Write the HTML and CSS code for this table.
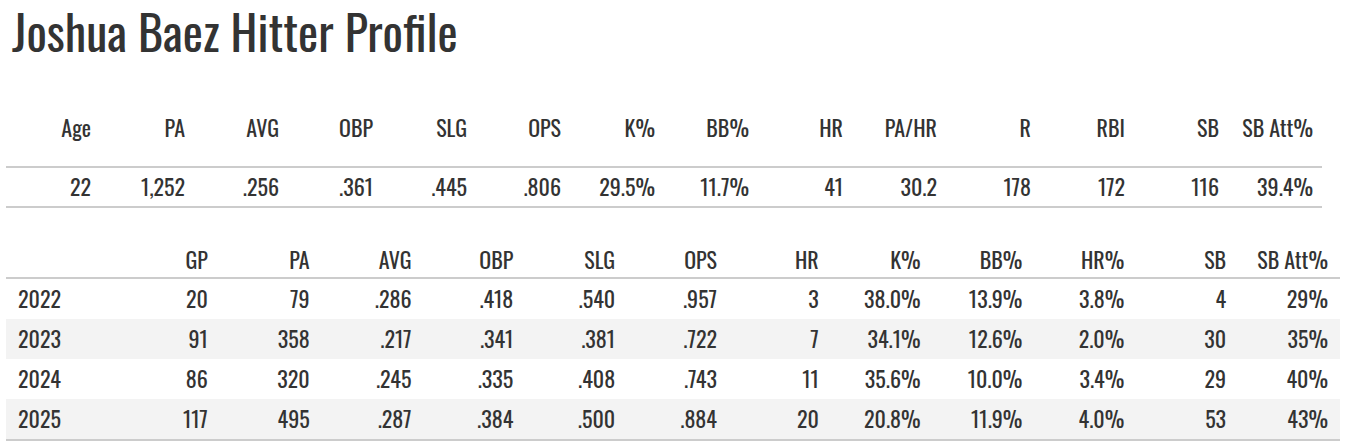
FILE: index.html
```html
<!DOCTYPE html>
<html lang="en">
<head>
<meta charset="utf-8">
<title>Joshua Baez Hitter Profile</title>
<link rel="stylesheet" href="styles.css">
</head>
<body>
<main class="page">
  <h1 class="title">Joshua Baez Hitter Profile</h1>

  <table class="stats summary">
    <thead>
      <tr>
        <th>Age</th><th>PA</th><th>AVG</th><th>OBP</th><th>SLG</th><th>OPS</th><th>K%</th>
        <th>BB%</th><th>HR</th><th>PA/HR</th><th>R</th><th>RBI</th><th>SB</th><th>SB Att%</th>
      </tr>
    </thead>
    <tbody>
      <tr>
        <td>22</td><td>1,252</td><td>.256</td><td>.361</td><td>.445</td><td>.806</td><td>29.5%</td>
        <td>11.7%</td><td>41</td><td>30.2</td><td>178</td><td>172</td><td>116</td><td>39.4%</td>
      </tr>
    </tbody>
  </table>

  <table class="stats seasons">
    <colgroup>
      <col class="col-year">
      <col span="12">
    </colgroup>
    <thead>
      <tr>
        <th class="year"></th><th>GP</th><th>PA</th><th>AVG</th><th>OBP</th><th>SLG</th><th>OPS</th>
        <th>HR</th><th>K%</th><th>BB%</th><th>HR%</th><th>SB</th><th>SB Att%</th>
      </tr>
    </thead>
    <tbody>
      <tr>
        <td class="year">2022</td><td>20</td><td>79</td><td>.286</td><td>.418</td><td>.540</td><td>.957</td>
        <td>3</td><td>38.0%</td><td>13.9%</td><td>3.8%</td><td>4</td><td>29%</td>
      </tr>
      <tr>
        <td class="year">2023</td><td>91</td><td>358</td><td>.217</td><td>.341</td><td>.381</td><td>.722</td>
        <td>7</td><td>34.1%</td><td>12.6%</td><td>2.0%</td><td>30</td><td>35%</td>
      </tr>
      <tr>
        <td class="year">2024</td><td>86</td><td>320</td><td>.245</td><td>.335</td><td>.408</td><td>.743</td>
        <td>11</td><td>35.6%</td><td>10.0%</td><td>3.4%</td><td>29</td><td>40%</td>
      </tr>
      <tr>
        <td class="year">2025</td><td>117</td><td>495</td><td>.287</td><td>.384</td><td>.500</td><td>.884</td>
        <td>20</td><td>20.8%</td><td>11.9%</td><td>4.0%</td><td>53</td><td>43%</td>
      </tr>
    </tbody>
  </table>
</main>
</body>
</html>
```
FILE: styles.css
```css
html, body {
  margin: 0;
  padding: 0;
  background: #ffffff;
}

.page {
  padding: 0 8px 0 6px;
  color: #333333;
  font-family: Oswald, "Roboto Condensed", sans-serif;
}

.title {
  font-family: Oswald, "Roboto Condensed", sans-serif;
  font-weight: 400;
  font-size: 48px;
  line-height: 62px;
  margin: 0 0 28px 6px;
  color: #333333;
}

.stats {
  border-collapse: collapse;
  table-layout: fixed;
  font-size: 22px;
  line-height: 28px;
}

.stats th,
.stats td {
  box-sizing: border-box;
  text-align: right;
  font-weight: 400;
  white-space: nowrap;
}

/* Summary table */
.summary {
  width: 1316px;
}

.summary th {
  padding: 23px 9px 25px 0;
  border-bottom: 2px solid #cccccc;
}

.summary td {
  padding: 4px 9px 6px 0;
  border-bottom: 2px solid #cccccc;
}

/* Seasons table */
.seasons {
  width: 100%;
  margin-top: 24px;
}

.seasons .col-year {
  width: 112px;
}

.seasons th {
  padding: 13px 12px 4px 0;
  border-bottom: 2px solid #cccccc;
}

.seasons td {
  padding: 5px 12px 7px 0;
}

.seasons .year {
  text-align: left;
  padding-left: 12px;
}

.seasons tbody tr:nth-child(even) {
  background: #f3f3f3;
}

.seasons tbody tr:last-child td {
  border-bottom: 2px solid #cccccc;
}
```
